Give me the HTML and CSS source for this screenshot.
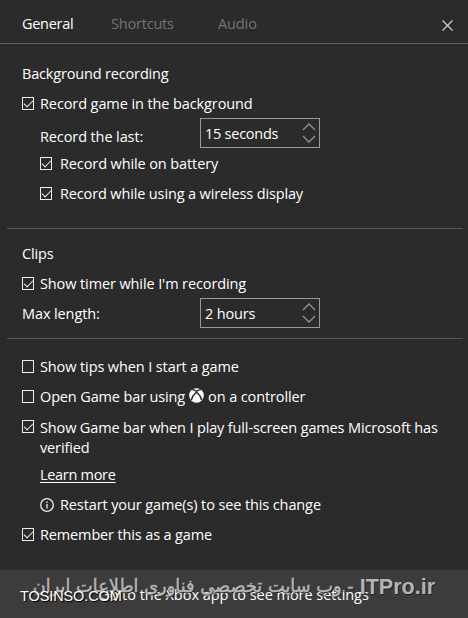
FILE: index.html
```html
<!DOCTYPE html>
<html lang="en">

<head>
  <meta charset="UTF-8" />
  <meta name="viewport" content="width=device-width, initial-scale=1.0" />
  <title>Game bar settings</title>
  <link rel="stylesheet" href="styles.css">
</head>

<body>
  <div class="window">
    <header>
      <nav>
        <a class="tab-general active">General</a>
        <a class="tab-shortcuts">Shortcuts</a>
        <a class="tab-audio">Audio</a>
      </nav>
      <svg class="close" width="11" height="11" viewBox="0 0 11 11"><path d="M.5.5l10 10M10.5.5l-10 10" /></svg>
    </header>

    <section class="recording">
      <h2 class="row">Background recording</h2>
      <div class="row"><i class="check on"></i><span class="loose">Record game in the background</span></div>
      <div class="row indent">
        <span class="label low">Record the last:</span>
        <div class="select"><span class="tight">15 seconds</span>
          <svg width="14" height="20" viewBox="0 0 14 20"><path d="M1 7l6-6 6 6M1 13l6 6 6-6" /></svg>
        </div>
      </div>
      <div class="row indent"><i class="check on"></i><span>Record while on battery</span></div>
      <div class="row indent"><i class="check on"></i><span class="snug">Record while using a wireless display</span></div>
    </section>

    <section class="clips">
      <h2 class="row">Clips</h2>
      <div class="row"><i class="check on"></i><span>Show timer while I'm recording</span></div>
      <div class="row">
        <span class="label wide">Max length:</span>
        <div class="select"><span class="hours">2 hours</span>
          <svg width="14" height="20" viewBox="0 0 14 20"><path d="M1 7l6-6 6 6M1 13l6 6 6-6" /></svg>
        </div>
      </div>
    </section>

    <section class="options">
      <div class="row"><i class="check"></i><span>Show tips when I start a game</span></div>
      <div class="row"><i class="check"></i><span class="snug">Open Game bar using</span>
        <svg class="xbox" width="15" height="15" viewBox="0 0 16 16">
          <circle cx="8" cy="8" r="7.8" />
          <path d="M3 1.800C5 1.500 6.500 2.500 8 3.600c1.500-1.100 3-2.100 5-1.800M8 4.200C5.500 6.300 3.200 9.300 2.500 13M8 4.200c2.500 2.100 4.800 5.100 5.500 8.800" />
        </svg>
        <span>on a controller</span>
      </div>
      <div class="row double"><i class="check on"></i><span class="snug">Show Game bar when I play full-screen games Microsoft has<br>verified</span></div>
      <div class="row indent"><a class="learn">Learn more</a></div>
      <div class="row indent">
        <svg class="info" width="14" height="14" viewBox="0 0 14 14"><circle cx="7" cy="7" r="6.300" /><path d="M7 6v4.500M7 3.500v1.400" /></svg>
        <span>Restart your game(s) to see this change</span>
      </div>
      <div class="row"><i class="check on"></i><span class="snug">Remember this as a game</span></div>
    </section>

    <footer>
      <span class="goto">Go to the Xbox app to see more settings</span>
      <div class="watermark" dir="rtl"><span class="site" dir="ltr">ITPro.ir</span><span class="fa">- وب سایت تخصصی فناوری اطلاعات ایران</span></div>
      <span class="tosinso">TOSINSO.COM</span>
    </footer>
  </div>
</body>

</html>
```

FILE: styles.css
```css
* {
  margin: 0;
  padding: 0;
  box-sizing: border-box;
}

body {
  background: #2b2b2b;
  color: #fff;
  font: 14.5px/20px "Open Sans", "Noto Sans", sans-serif;
  letter-spacing: -0.11px;
}

.window {
  width: 468px;
  height: 618px;
  display: flex;
  flex-direction: column;
  overflow: hidden;
  white-space: nowrap;
}

header {
  height: 44px;
  padding: 4px 15px 0 22px;
  border-bottom: 1px solid #606060;
  display: flex;
  align-items: center;
  justify-content: space-between;
}

nav {
  display: flex;
  color: #747474;
}

nav .active {
  color: #fff;
  letter-spacing: -0.3px;
}

.tab-general {
  width: 89px;
}

.tab-shortcuts {
  width: 107px;
  letter-spacing: -0.2px;
}

.close {
  margin-top: 4px;
  stroke-width: 1.2;
}

svg {
  display: block;
  flex: none;
  fill: none;
  stroke: #d0d0d0;
}

section {
  padding-left: 15px;
  margin: 0 5px 0 7px;
}

.recording {
  height: 185px;
  padding-top: 15px;
  border-bottom: 1px solid #565656;
}

.clips {
  height: 110px;
  padding-top: 10px;
  border-bottom: 1px solid #565656;
}

.options {
  height: 231px;
  padding-top: 13px;
}

h2 {
  font-size: inherit;
  font-weight: normal;
  letter-spacing: -0.17px;
}

.row {
  height: 30px;
  display: flex;
  align-items: center;
}

.loose {
  letter-spacing: -0.1px;
}

.snug {
  letter-spacing: -0.14px;
}

.tight {
  letter-spacing: -0.25px;
}

.hours {
  letter-spacing: -0.15px;
}

.indent {
  padding-left: 18px;
}

.double {
  height: 48px;
  padding-top: 6px;
  align-items: flex-start;
}

.double .check {
  margin-top: 2px;
}

.check {
  width: 12px;
  height: 13px;
  margin: -1px 6px 0 0;
  border: 1px solid #eee;
  flex: none;
}

.indent .check {
  margin-right: 8px;
}

.check.on::before {
  content: "";
  display: block;
  width: 8px;
  height: 4px;
  margin: 2px 0 0 1px;
  border: solid #eee;
  border-width: 0 0 1.3px 1.3px;
  transform: rotate(-45deg);
}

.label {
  width: 160px;
}

.label.wide {
  width: 178px;
}

.label.low {
  padding-top: 6px;
}

.select {
  width: 120px;
  height: 30px;
  margin-top: -2px;
  padding: 0 3px 0 4px;
  border: 1px solid #999;
  display: flex;
  align-items: center;
  justify-content: space-between;
}

.select span {
  padding-top: 2px;
}

.select svg {
  stroke: #929292;
  stroke-width: 1.3;
}

.xbox {
  margin: -4px 4px 0 4px;
}

.xbox circle {
  fill: #fff;
  stroke: none;
}

.xbox path {
  stroke: #2b2b2b;
  stroke-width: 1.5;
}

.learn {
  letter-spacing: -0.3px;
  text-decoration: underline;
  text-underline-offset: 2px;
  text-decoration-skip-ink: none;
}

.info {
  margin-right: 6px;
  stroke: #eee;
  stroke-width: 1.3;
}

footer {
  height: 48px;
  background: #3c3c3c;
  position: relative;
  display: flex;
  justify-content: center;
  align-items: center;
}

.goto {
  padding-top: 2px;
  letter-spacing: -0.03px;
}

/* site stamps lie over the footer text */
.watermark {
  position: absolute;
  right: 33px;
  top: 6px;
  display: flex;
  align-items: flex-start;
  gap: 6px;
  color: #b4b4b4;
  text-shadow: 1px 1px 0 #222;
  letter-spacing: 0;
}

.site {
  font: bold 21.5px/22px "Liberation Sans", sans-serif;
}

.fa {
  font: 17.8px/20px "DejaVu Sans", sans-serif;
  -webkit-text-stroke: 0.5px #b4b4b4;
}

.tosinso {
  position: absolute;
  left: 20px;
  top: 16px;
  font: 14.5px/20px "Liberation Sans", sans-serif;
  text-shadow: 1px 1px 1px #000;
}
```
